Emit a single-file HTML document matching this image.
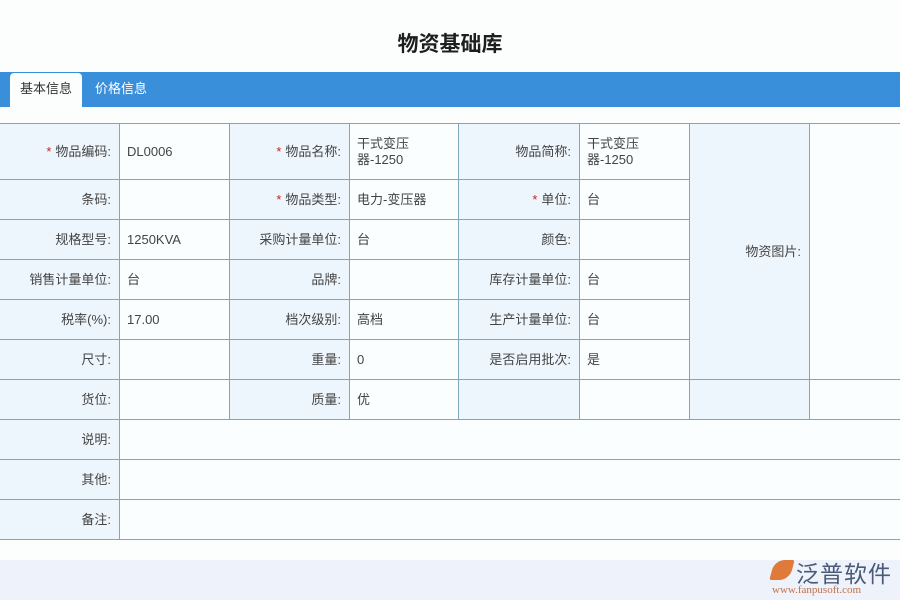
<!DOCTYPE html>
<html><head><meta charset="utf-8"><style>
body{margin:0;width:900px;height:600px;background:#fcfefe;font-family:"Liberation Sans","Noto Sans CJK SC",sans-serif;position:relative;overflow:hidden;color:#444;font-size:13px}
.t{position:absolute;left:0;width:900px;top:28px;text-align:center;font-size:21px;font-weight:bold;color:#1e1e1e}
.bar{position:absolute;left:0;top:72px;width:900px;height:35px;background:#3a8fdb}
.tab1{position:absolute;left:10px;top:73px;width:72px;height:34px;background:#fcfefe;border-radius:4px 4px 0 0;text-align:center;line-height:31px;color:#333}
.tab2{position:absolute;left:95px;top:73px;line-height:31px;color:#fff}
.c{position:absolute;box-sizing:border-box;border-right:1px solid #7fa9b8;border-bottom:1px solid #7fa9b8;display:flex;align-items:center;line-height:16px}
.l{background:#eef6fd;justify-content:flex-end;padding-right:8px}
.v{background:#fbfefe;padding-left:7px}
.s{color:#d02020;margin-right:4px}
.foot{position:absolute;left:0;top:560px;width:900px;height:40px;background:#eef3fb}
</style></head><body>
<div class="t">物资基础库</div>
<div class="bar"></div><div class="tab1">基本信息</div><div class="tab2">价格信息</div>
<div style="position:absolute;left:0;top:123px;width:900px;border-top:1px solid #7fa9b8"></div>
<div id="g"></div>
<div class="foot"></div>
<div style="position:absolute;left:772px;top:560px;width:20px;height:20px;background:#e07a3a;border-radius:10px 2px 10px 2px;transform:skewX(-15deg)"></div>
<div style="position:absolute;left:796px;top:555px;font-size:23px;color:#4a5a78;letter-spacing:1px">泛普软件</div>
<div style="position:absolute;left:772px;top:584px;font-size:11px;color:#c0704a;font-family:'Liberation Serif',serif">www.fanpusoft.com</div>
<script>
var X=[0,120,230,350,459,580,690,810,901],Y=[124,180,220,260,300,340,380,420,460,500,540];
var R=[["*物品编码:","DL0006","*物品名称:","干式变压<br>器-1250","物品简称:","干式变压<br>器-1250"],
["条码:","","*物品类型:","电力-变压器","*单位:","台"],
["规格型号:","1250KVA","采购计量单位:","台","颜色:",""],
["销售计量单位:","台","品牌:","","库存计量单位:","台"],
["税率(%):","17.00","档次级别:","高档","生产计量单位:","台"],
["尺寸:","","重量:","0","是否启用批次:","是"],
["货位:","","质量:","优","",""]];
var h="";
function cell(x1,x2,y1,y2,cls,t){if(t&&t[0]=="*")t='<span class="s">*</span>'+t.slice(1);
h+='<div class="c '+cls+'" style="left:'+X[x1]+'px;width:'+(X[x2]-X[x1])+'px;top:'+Y[y1]+'px;height:'+(Y[y2]-Y[y1])+'px">'+(t||"")+'</div>';}
for(var r=0;r<7;r++)for(var k=0;k<6;k++)cell(k,k+1,r,r+1,k%2?"v":"l",R[r][k]);
cell(6,7,0,6,"l","物资图片:");cell(7,8,0,6,"v","");cell(6,7,6,7,"l","");cell(7,8,6,7,"v","");
["说明:","其他:","备注:"].forEach(function(t,i){cell(0,1,7+i,8+i,"l",t);cell(1,8,7+i,8+i,"v","");});
document.getElementById("g").innerHTML=h;
</script>
</body></html>
